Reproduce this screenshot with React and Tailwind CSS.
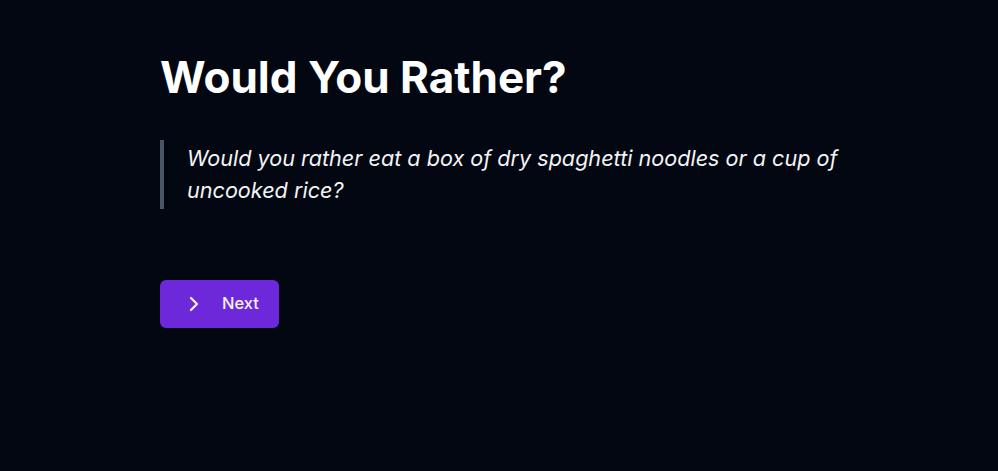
import { ChevronRight } from 'lucide-react'

const question = 'Would you rather eat a box of dry spaghetti noodles or a cup of uncooked rice?'

const App = () => {
  return (
    <div className="min-h-screen bg-[#030712] font-['Inter',sans-serif] text-white">
      <div className="mx-auto w-[678px] pt-[53px]">
        <h1 className="text-[44px] leading-[48px] font-bold">Would You Rather?</h1>

        <blockquote className="mt-[39px] border-l-4 border-gray-600 py-0.5 pl-[23px]">
          <p className="text-[1.35rem] leading-normal italic text-gray-100">{question}</p>
        </blockquote>

        <button
          type="button"
          className="mt-[71px] flex h-12 items-center gap-4 rounded-md bg-[#6d28d9] pl-[22px] pr-5 text-[16.5px] font-medium text-violet-50"
        >
          <ChevronRight className="h-6 w-6" strokeWidth={2.25} />
          Next
        </button>
      </div>
    </div>
  )
}

export default App
